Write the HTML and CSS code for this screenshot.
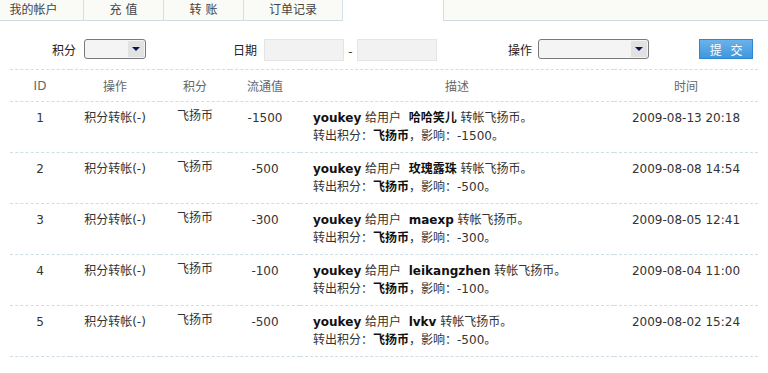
FILE: index.html
```html
<!DOCTYPE html>
<html lang="zh-CN">

<head>
    <meta charset="UTF-8">
    <title>积分记录</title>
    <link rel="stylesheet" href="styles.css">
</head>

<body>
    <div class="tabs">
        <a href="#" class="tab tab-first">我的帐户</a>
        <a href="#" class="tab tab-short">充 值</a>
        <a href="#" class="tab tab-short">转 账</a>
        <a href="#" class="tab tab-long">订单记录</a>
        <div class="tab-gap"></div>
        <div class="tab-fill"></div>
    </div>

    <form class="filter" onsubmit="return false">
        <div class="field field-credit">
            <label>积分</label>
            <div class="select select-small"><span class="arrow"></span></div>
        </div>
        <div class="field field-date">
            <label>日期</label>
            <input type="text" class="date-input">
            <span class="dash">-</span>
            <input type="text" class="date-input">
        </div>
        <div class="field field-op">
            <label>操作</label>
            <div class="select select-wide"><span class="arrow"></span></div>
        </div>
        <button class="submit-btn">提 交</button>
    </form>

    <table class="records">
        <thead>
            <tr>
                <th class="col-id">ID</th>
                <th class="col-op">操作</th>
                <th class="col-credit">积分</th>
                <th class="col-amount">流通值</th>
                <th class="col-desc">描述</th>
                <th class="col-time">时间</th>
            </tr>
        </thead>
        <tbody id="record-rows"></tbody>
    </table>

    <script>
        const records = [
            { id: 1, amount: "-1500", user: "哈哈笑儿", time: "2009-08-13 20:18" },
            { id: 2, amount: "-500", user: "玫瑰露珠", time: "2009-08-08 14:54" },
            { id: 3, amount: "-300", user: "maexp", time: "2009-08-05 12:41" },
            { id: 4, amount: "-100", user: "leikangzhen", time: "2009-08-04 11:00" },
            { id: 5, amount: "-500", user: "lvkv", time: "2009-08-02 15:24" }
        ];

        const tbody = document.getElementById("record-rows");
        records.forEach(rec => {
            const row = document.createElement("tr");
            row.innerHTML = `
                <td class="col-id">${rec.id}</td>
                <td class="col-op">积分转帐(-)</td>
                <td class="col-credit credit-name">飞扬币</td>
                <td class="col-amount">${rec.amount}</td>
                <td class="col-desc">
                    <b>youkey</b> 给用户&nbsp; <b>${rec.user}</b> 转帐飞扬币。<br>
                    转出积分：<b>飞扬币</b>，影响：${rec.amount}。
                </td>
                <td class="col-time">${rec.time}</td>
            `;
            tbody.appendChild(row);
        });
    </script>
</body>

</html>
```

FILE: styles.css
```css
* {
    margin: 0;
    padding: 0;
    box-sizing: border-box;
}

body {
    font-family: "DejaVu Sans", "Noto Sans CJK SC", sans-serif;
    font-size: 12px;
    color: #333;
    background: #fff;
}

/* Tabs */
.tabs {
    display: flex;
    height: 21px;
}

.tab {
    display: block;
    height: 21px;
    line-height: 20px;
    text-align: center;
    color: #444;
    text-decoration: none;
    background: #fafaf6;
    border-right: 1px solid #d6e0e4;
    border-bottom: 1px solid #cfdce2;
}

.tab-first {
    width: 84px;
    padding-right: 16px;
}

.tab-short {
    width: 80px;
}

.tab-long {
    width: 99px;
}

.tab-gap {
    width: 100px;
}

.tab-fill {
    flex: 1;
    background: #fafaf6;
    border-left: 1px solid #cfdce2;
    border-bottom: 1px solid #cfdce2;
}

/* Filter */
.filter {
    display: flex;
    align-items: center;
    height: 20px;
    margin-top: 18px;
    padding-left: 52px;
}

.field {
    display: flex;
    align-items: center;
}

.field label {
    color: #222;
}

.field-credit label {
    margin-right: 8px;
}

.field-date {
    margin-left: 87px;
}

.field-date label {
    margin-right: 7px;
}

.field-op {
    margin-left: 71px;
}

.field-op label {
    margin-right: 6px;
}

.select {
    position: relative;
    height: 20px;
    border: 1px solid #7a7a7a;
    border-radius: 3px;
    background: #f4f4f4;
}

.select-small {
    width: 62px;
}

.select-wide {
    width: 111px;
}

.select .arrow {
    position: absolute;
    right: 1px;
    top: 1px;
    width: 16px;
    height: 16px;
    background: #e2e2e2;
}

.select .arrow::after {
    content: "";
    position: absolute;
    left: 4px;
    top: 6px;
    border-left: 4px solid transparent;
    border-right: 4px solid transparent;
    border-top: 4px solid #0a1450;
}

.date-input {
    width: 80px;
    height: 22px;
    margin-top: 2px;
    border: 1px solid #e4e4e4;
    background: #f2f2f2;
}

.dash {
    width: 13px;
    text-align: center;
    margin-top: 6px;
    color: #444;
}

.submit-btn {
    margin-left: 50px;
    width: 54px;
    height: 20px;
    border: 1px solid #2f86cf;
    background: linear-gradient(#6ab2ec, #3f97dc);
    color: #fff;
    font-family: "Noto Sans CJK SC", sans-serif;
    font-size: 12px;
    letter-spacing: 3px;
    padding-left: 3px;
    cursor: pointer;
}

/* Table */
.records {
    width: 748px;
    margin: 10px 0 0 10px;
    border-collapse: collapse;
}

.records th,
.records td {
    border-bottom: 1px dashed #cfdde5;
    text-align: center;
    vertical-align: top;
    font-weight: normal;
}

.records thead tr {
    border-top: 1px dashed #cfdde5;
}

.records th {
    height: 32px;
    vertical-align: middle;
    color: #666;
}

.records td {
    height: 51px;
    padding-top: 7px;
    line-height: 18px;
}

.col-id {
    width: 60px;
}

.col-op {
    width: 90px;
}

.col-credit {
    width: 70px;
}

.credit-name {
    position: relative;
    top: -2px;
}

.col-amount {
    width: 70px;
}

.records td.col-desc {
    width: 314px;
    text-align: left;
    padding-left: 13px;
}

.col-desc b {
    color: #111;
    font-weight: bold;
}
```
